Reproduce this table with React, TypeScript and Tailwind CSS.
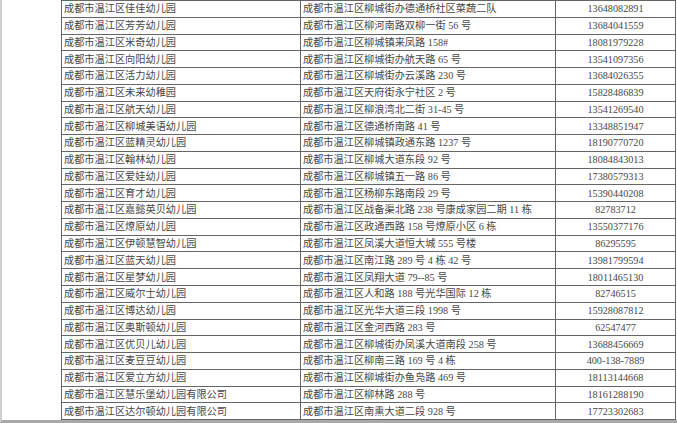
import React from "react";

const rows: Array<[string, string, string]> = [
  ["成都市温江区佳佳幼儿园", "成都市温江区柳城街办德通桥社区菜蔬二队", "13648082891"],
  ["成都市温江区芳芳幼儿园", "成都市温江区柳河南路双柳一街 56 号", "13684041559"],
  ["成都市温江区米奇幼儿园", "成都市温江区柳城镇来凤路 158#", "18081979228"],
  ["成都市温江区向阳幼儿园", "成都市温江区柳城街办航天路 65 号", "13541097356"],
  ["成都市温江区活力幼儿园", "成都市温江区柳城街办云溪路 230 号", "13684026355"],
  ["成都市温江区未来幼稚园", "成都市温江区天府街永宁社区 2 号", "15828486839"],
  ["成都市温江区航天幼儿园", "成都市温江区柳浪湾北二街 31-45 号", "13541269540"],
  ["成都市温江区柳城美语幼儿园", "成都市温江区德通桥南路 41 号", "13348851947"],
  ["成都市温江区蓝精灵幼儿园", "成都市温江区柳城镇政通东路 1237 号", "18190770720"],
  ["成都市温江区翰林幼儿园", "成都市温江区柳城大道东段 92 号", "18084843013"],
  ["成都市温江区爱娃幼儿园", "成都市温江区柳城镇五一路 86 号", "17380579313"],
  ["成都市温江区育才幼儿园", "成都市温江区杨柳东路南段 29 号", "15390440208"],
  ["成都市温江区嘉懿英贝幼儿园", "成都市温江区战备渠北路 238 号康成家园二期 11 栋", "82783712"],
  ["成都市温江区燎原幼儿园", "成都市温江区政通西路 158 号燎原小区 6 栋", "13550377176"],
  ["成都市温江区伊顿慧智幼儿园", "成都市温江区凤溪大道恒大城 555 号楼", "86295595"],
  ["成都市温江区蓝天幼儿园", "成都市温江区南江路 289 号 4 栋 42 号", "13981799594"],
  ["成都市温江区星梦幼儿园", "成都市温江区凤翔大道 79--85 号", "18011465130"],
  ["成都市温江区威尔士幼儿园", "成都市温江区人和路 188 号光华国际 12 栋", "82746515"],
  ["成都市温江区博达幼儿园", "成都市温江区光华大道三段 1998 号", "15928087812"],
  ["成都市温江区奥斯顿幼儿园", "成都市温江区金河西路 283 号", "62547477"],
  ["成都市温江区优贝儿幼儿园", "成都市温江区柳城街办凤溪大道南段 258 号", "13688456669"],
  ["成都市温江区麦豆豆幼儿园", "成都市温江区柳南三路 169 号 4 栋", "400-138-7889"],
  ["成都市温江区爱立方幼儿园", "成都市温江区柳城街办鱼凫路 469 号", "18113144668"],
  ["成都市温江区慧乐堡幼儿园有限公司", "成都市温江区柳林路 288 号", "18161288190"],
  ["成都市温江区达尔顿幼儿园有限公司", "成都市温江区南熏大道二段 928 号", "17723302683"],
];

export default function App() {
  return (
    <div className="w-[677px] h-[423px] bg-white overflow-hidden">
      <div
        className="flex h-[423px] border-l-2 border-l-[#cfcfcf] border-b-[3px] border-b-[#a8a8a8] text-[#474747] text-[10.2px]"
        style={{ fontFamily: '"Liberation Serif", "Noto Sans CJK SC", serif' }}
      >
        <div className="w-[60px] border-r border-[#666]" />
        <div className="w-[614px] flex flex-col border-t border-[#666] border-r">
          {rows.map((r, i) => (
            <div
              key={i}
              className="grid grid-cols-[239px_255px_119px] h-[16.8px] border-b border-[#666] leading-none"
            >
              <div className="flex items-center pl-[2px] pt-[1px] border-r border-[#666] whitespace-nowrap">
                {r[0]}
              </div>
              <div className="flex items-center pl-[2px] pt-[1px] border-r border-[#666] whitespace-nowrap">
                {r[1]}
              </div>
              <div className="flex items-center justify-center pt-[1px] whitespace-nowrap">{r[2]}</div>
            </div>
          ))}
        </div>
      </div>
    </div>
  );
}
